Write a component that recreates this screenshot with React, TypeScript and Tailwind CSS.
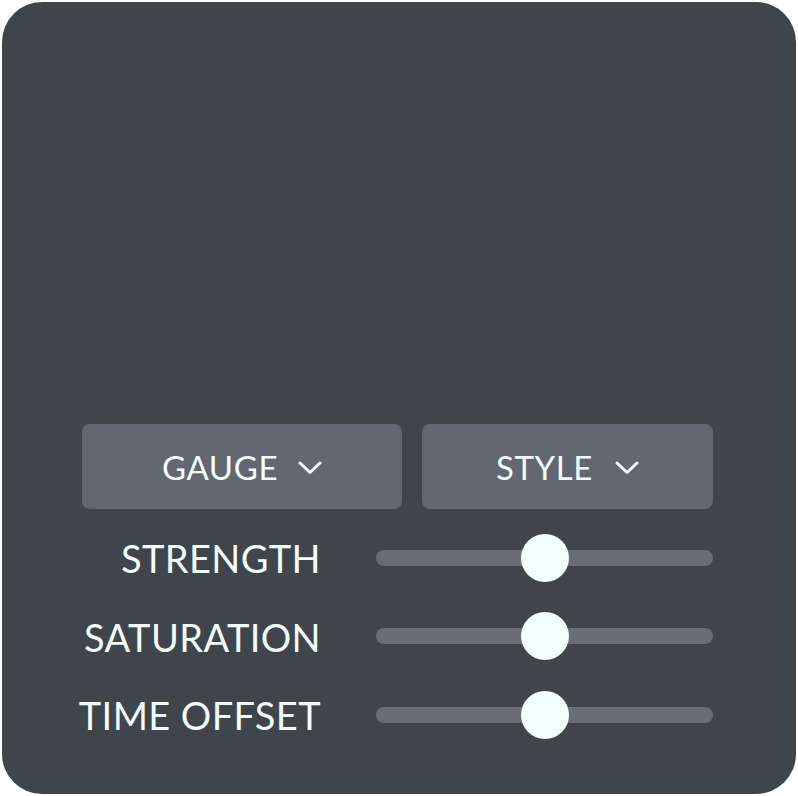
import React from "react";

function Chevron() {
  return (
    <svg width="24" height="14" viewBox="0 0 24 14" fill="none" className="shrink-0">
      <path d="M2 2 L12 11.5 L22 2" stroke="#f1fcff" strokeWidth="3" strokeLinecap="round" strokeLinejoin="round" />
    </svg>
  );
}

function Slider({ value }: { value: number }) {
  return (
    <div className="relative h-[16px] w-full rounded-full bg-[#686d78]">
      <div
        className="absolute top-1/2 h-[48px] w-[48px] -translate-x-1/2 -translate-y-1/2 rounded-full bg-[#f3feff]"
        style={{ left: `${value}%` }}
      />
    </div>
  );
}

export default function App() {
  const rows = ["STRENGTH", "SATURATION", "TIME OFFSET"];
  return (
    <div className="min-h-[796px] w-[798px] bg-white p-[2px]" style={{ fontFamily: "Lato, 'Noto Sans', sans-serif" }}>
      <div className="flex h-[792px] w-[794px] flex-col justify-end rounded-[40px] bg-[#40444b] pb-[40px] pl-[80px] pr-[83px] text-[#f1fcff]">
        <div className="flex gap-[20px]">
          <button className="flex h-[85px] w-[320px] items-center justify-center gap-[20px] rounded-[8px] bg-[#626771] text-[33px] leading-none tracking-[0.6px]">
            <span className="pt-[3px]">GAUGE</span>
            <span className="pt-[3px]"><Chevron /></span>
          </button>
          <button className="flex h-[85px] flex-1 items-center justify-center gap-[22px] rounded-[8px] bg-[#626771] text-[33px] leading-none tracking-[0.6px]">
            <span className="pt-[3px]">STYLE</span>
            <span className="pt-[3px]"><Chevron /></span>
          </button>
        </div>
        <div className="mt-[10px] grid grid-cols-[239px_1fr] gap-x-[55px]">
          {rows.map((r) => (
            <React.Fragment key={r}>
              <div className="flex h-[78.5px] items-center justify-end whitespace-nowrap pt-[1px] text-[38px] leading-none tracking-[0.4px]">{r}</div>
              <div className="flex h-[78.5px] items-center">
                <Slider value={50} />
              </div>
            </React.Fragment>
          ))}
        </div>
      </div>
    </div>
  );
}
